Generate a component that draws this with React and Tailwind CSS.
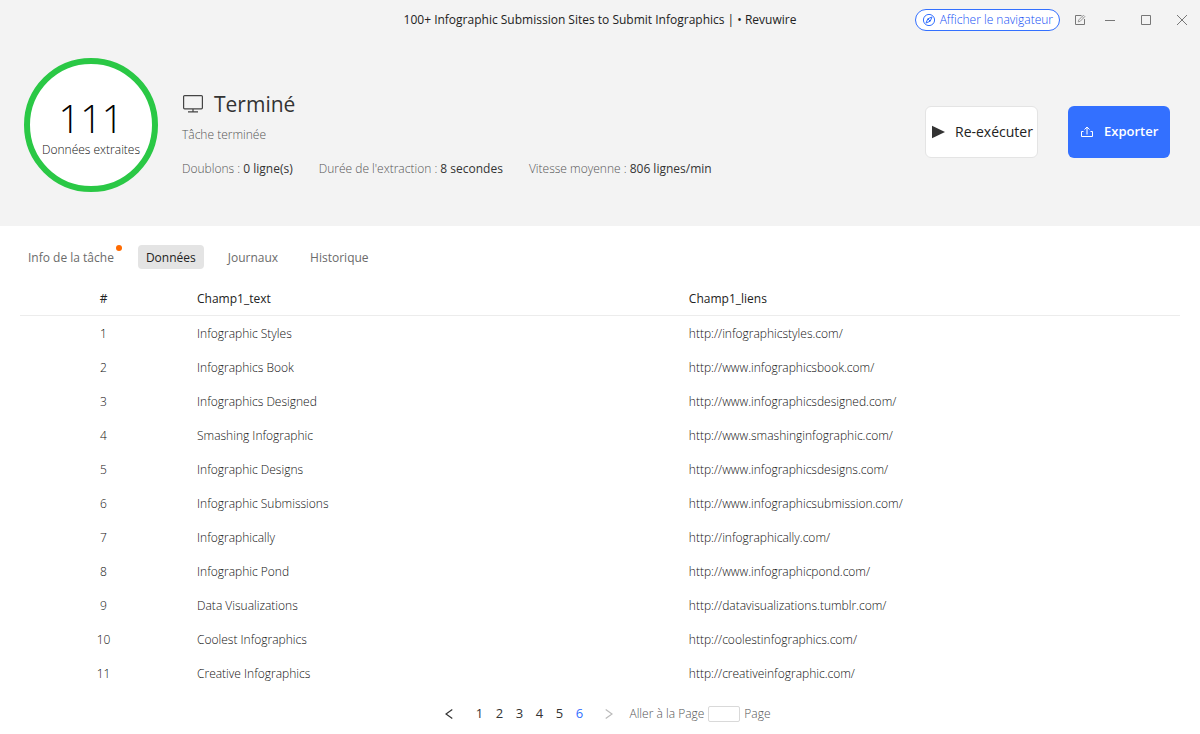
import React, { useState } from 'react';

const rows = [
    { text: 'Infographic Styles', link: 'http://infographicstyles.com/' },
    { text: 'Infographics Book', link: 'http://www.infographicsbook.com/' },
    { text: 'Infographics Designed', link: 'http://www.infographicsdesigned.com/' },
    { text: 'Smashing Infographic', link: 'http://www.smashinginfographic.com/' },
    { text: 'Infographic Designs', link: 'http://www.infographicsdesigns.com/' },
    { text: 'Infographic Submissions', link: 'http://www.infographicsubmission.com/' },
    { text: 'Infographically', link: 'http://infographically.com/' },
    { text: 'Infographic Pond', link: 'http://www.infographicpond.com/' },
    { text: 'Data Visualizations', link: 'http://datavisualizations.tumblr.com/' },
    { text: 'Coolest Infographics', link: 'http://coolestinfographics.com/' },
    { text: 'Creative Infographics', link: 'http://creativeinfographic.com/' },
];

const stats = [
    { label: 'Doublons', value: '0 ligne(s)' },
    { label: "Durée de l'extraction", value: '8 secondes' },
    { label: 'Vitesse moyenne', value: '806 lignes/min' },
];

const tabs = [
    { name: 'Info de la tâche', dot: true },
    { name: 'Données' },
    { name: 'Journaux' },
    { name: 'Historique' },
];

const pages = [1, 2, 3, 4, 5, 6];

const TitleBar = () => (
    <div className="grid h-[39px] grid-cols-[1fr_auto_1fr] items-center">
        <h1 className="col-start-2 text-xs font-normal text-[#222]">
            100+ Infographic Submission Sites to Submit Infographics | • Revuwire
        </h1>
        <div className="flex items-center justify-end pr-2.5">
            <button
                type="button"
                className="mr-3 flex h-[22px] items-center gap-1 whitespace-nowrap rounded-full border border-[#3370ff] bg-white px-1.5 text-xs font-light text-[#1450f5]"
            >
                <svg width="14" height="14" viewBox="0 0 14 14" fill="none" stroke="#3370ff">
                    <circle cx="7" cy="7" r="5.6" />
                    <path d="M10 4 8.2 8.2 4 10l1.8-4.2z" />
                    <path d="M5.8 5.8l2.4 2.4" />
                </svg>
                Afficher le navigateur
            </button>
            <button type="button" aria-label="Modifier" className="flex w-4 justify-center text-[#777]">
                <svg width="12" height="12" viewBox="0 0 12 12" fill="none" stroke="currentColor">
                    <path d="M7.5 1.5h-6v9h9V5" />
                    <path d="M9.4 1.2l1.4 1.4-4.6 4.7-2 .6.6-2z" stroke="#999" />
                    <path d="M8.2 2.5l1.3 1.3" stroke="#999" />
                </svg>
            </button>
            <div className="ml-3.5 flex gap-5 text-[#777]">
                <button type="button" aria-label="Réduire" className="flex w-4 justify-center">
                    <svg width="12" height="12" viewBox="0 0 12 12" fill="none" stroke="currentColor">
                        <path d="M1 6.5h10" />
                    </svg>
                </button>
                <button type="button" aria-label="Agrandir" className="flex w-4 justify-center">
                    <svg width="12" height="12" viewBox="0 0 12 12" fill="none" stroke="currentColor">
                        <path d="M1.5 1.5h9v9h-9z" />
                    </svg>
                </button>
                <button type="button" aria-label="Fermer" className="flex w-4 justify-center">
                    <svg width="12" height="12" viewBox="0 0 12 12" fill="none" stroke="currentColor">
                        <path d="M1 1l10 10M11 1 1 11" />
                    </svg>
                </button>
            </div>
        </div>
    </div>
);

const Summary = () => (
    <section className="flex items-start pb-[34px] pl-6 pr-[30px] pt-[19px]">
        {/* Compteur */}
        <div className="flex size-[134px] shrink-0 flex-col items-center rounded-full border-[6px] border-[#2ac845] bg-white pt-9">
            <div className="text-[38px] font-light leading-9 text-black">111</div>
            <div className="mt-1.5 whitespace-nowrap text-xs leading-4 text-[#111]">Données extraites</div>
        </div>

        {/* État de la tâche */}
        <div className="ml-6 flex-1 pt-[30px]">
            <div className="flex items-center gap-2.5">
                <svg width="22" height="18" viewBox="0 0 22 18" fill="none" stroke="#444">
                    <rect x="1.6" y="0.6" width="18.8" height="13.2" rx="1" strokeWidth="1.2" />
                    <path d="M11 14v3M6 16.8h10" strokeWidth="1.2" />
                </svg>
                <h2 className="text-[21px] font-medium leading-8 text-[#333]">Terminé</h2>
            </div>
            <p className="mt-[7px] text-xs leading-4 text-[#555]">Tâche terminée</p>
            <div className="mt-[18px] flex gap-[26px] text-xs leading-4 text-[#555]">
                {stats.map((stat) => (
                    <span key={stat.label} className="whitespace-nowrap">
                        {stat.label} : <b className="font-medium text-[#333]">{stat.value}</b>
                    </span>
                ))}
            </div>
        </div>

        {/* Actions */}
        <div className="flex shrink-0 gap-[30px] pt-12">
            <button
                type="button"
                className="flex h-[52px] w-[113px] items-center gap-2.5 whitespace-nowrap rounded-md border border-[#e4e4e4] bg-white pl-1.5 text-sm font-normal text-[#222]"
            >
                <svg width="13" height="14" viewBox="0 0 13 14" fill="#333">
                    <path d="M0 .8 13 7 0 13.2z" />
                </svg>
                Re-exécuter
            </button>
            <button
                type="button"
                className="flex h-[52px] w-[102px] items-center gap-2.5 rounded-md bg-[#3370ff] pl-3 text-[13px] font-semibold text-white"
            >
                <svg width="14" height="12" viewBox="0 0 14 12" fill="none" stroke="currentColor">
                    <path d="M3.5 5.5h-2v5h11v-5h-2" />
                    <path d="M7 8.5v-7M4.5 3.5 7 1l2.5 2.5" />
                </svg>
                Exporter
            </button>
        </div>
    </section>
);

const Tabs = ({ active, onChange }) => (
    <nav className="flex gap-4 text-xs font-medium">
        {tabs.map((tab) => (
            <button
                key={tab.name}
                type="button"
                onClick={() => onChange(tab.name)}
                className={
                    tab.name === active
                        ? 'relative h-6 rounded-sm bg-[#e4e4e4] px-2 pt-0.5 text-[#222]'
                        : 'relative h-6 rounded-sm px-2 pt-0.5 text-[#6b6b6b]'
                }
            >
                {tab.name}
                {tab.dot && <span className="absolute right-0 top-0 size-1.5 rounded-full bg-[#ff6a00]" />}
            </button>
        ))}
    </nav>
);

const DataTable = () => (
    <table className="mt-3 w-full table-fixed text-left text-xs text-[#111]">
        <thead>
            <tr className="h-[34px] border-b border-[#ececec] text-[#222]">
                <th className="w-[14.4%] pt-0.5 text-center font-medium">#</th>
                <th className="w-[42.4%] px-2.5 pt-0.5 font-medium">Champ1_text</th>
                <th className="px-2.5 pt-0.5 font-medium">Champ1_liens</th>
            </tr>
        </thead>
        <tbody>
            {rows.map((row, index) => (
                <tr key={row.link} className="h-[34px]">
                    <td className="pt-1 text-center">{index + 1}</td>
                    <td className="px-2.5 pt-1">{row.text}</td>
                    <td className="px-2.5 pt-1">{row.link}</td>
                </tr>
            ))}
        </tbody>
    </table>
);

const Pagination = ({ page, onChange }) => (
    <footer className="mt-4 flex items-center justify-center pl-4 text-xs">
        <button
            type="button"
            aria-label="Page précédente"
            onClick={() => onChange(Math.max(1, page - 1))}
            className="mr-4 text-[#333]"
        >
            <svg width="8" height="10" viewBox="0 0 8 10" fill="none" stroke="currentColor" strokeWidth="1.2">
                <path d="M7.3.5 1 5l6.3 4.5" />
            </svg>
        </button>
        {pages.map((n) => (
            <button
                key={n}
                type="button"
                onClick={() => onChange(n)}
                className={
                    n === page
                        ? 'w-5 text-[13px] font-normal text-[#3370ff]'
                        : 'w-5 text-[13px] font-normal text-[#333]'
                }
            >
                {n}
            </button>
        ))}
        <button
            type="button"
            aria-label="Page suivante"
            disabled={page === pages.length}
            onClick={() => onChange(page + 1)}
            className="mx-4 text-[#bbb]"
        >
            <svg width="8" height="10" viewBox="0 0 8 10" fill="none" stroke="currentColor" strokeWidth="1.2">
                <path d="M.7.5 7 5 .7 9.5" />
            </svg>
        </button>
        <label htmlFor="goto" className="text-[#555]">Aller à la Page</label>
        <input id="goto" type="text" className="mx-1 h-4 w-8 rounded-xs border border-[#d9d9d9] bg-white px-1" />
        <span className="text-[#555]">Page</span>
    </footer>
);

const App = () => {
    const [tab, setTab] = useState('Données');
    const [page, setPage] = useState(6);

    return (
        <div className="min-h-screen bg-white font-['Open_Sans',sans-serif] font-light">
            <header className="bg-[#f3f3f3]">
                <TitleBar />
                <Summary />
            </header>
            <main className="px-5 pt-[19px]">
                <Tabs active={tab} onChange={setTab} />
                <DataTable />
                <Pagination page={page} onChange={setPage} />
            </main>
        </div>
    );
};

export default App;
